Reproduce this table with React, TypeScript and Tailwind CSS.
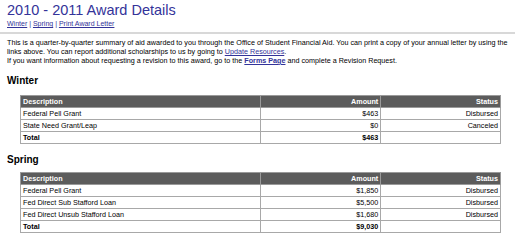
const winter = [
  { desc: "Federal Pell Grant", amount: "$463", status: "Disbursed" },
  { desc: "State Need Grant/Leap", amount: "$0", status: "Canceled" },
]

const spring = [
  { desc: "Federal Pell Grant", amount: "$1,850", status: "Disbursed" },
  { desc: "Fed Direct Sub Stafford Loan", amount: "$5,500", status: "Disbursed" },
  { desc: "Fed Direct Unsub Stafford Loan", amount: "$1,680", status: "Disbursed" },
]

type Row = { desc: string; amount: string; status: string }

function AwardTable({ rows, total }: { rows: Row[]; total: string }) {
  return (
    <table className="ml-[13px] w-[481px] border-collapse text-[7.2px] leading-[11px] text-black">
      <thead>
        <tr className="bg-[#5c5c5c] text-white font-bold">
          <th className="w-[241px] border border-[#9a9a9a] px-[2px] text-left font-bold">Description</th>
          <th className="w-[120px] border border-[#9a9a9a] px-[2px] text-right font-bold">Amount</th>
          <th className="w-[120px] border border-[#9a9a9a] px-[2px] text-right font-bold">Status</th>
        </tr>
      </thead>
      <tbody>
        {rows.map((r) => (
          <tr key={r.desc}>
            <td className="border border-[#a8a8a8] px-[2px]">{r.desc}</td>
            <td className="border border-[#a8a8a8] px-[2px] text-right">{r.amount}</td>
            <td className="border border-[#a8a8a8] px-[2px] text-right">{r.status}</td>
          </tr>
        ))}
        <tr className="font-bold">
          <td className="border border-[#a8a8a8] px-[2px]">Total</td>
          <td className="border border-[#a8a8a8] px-[2px] text-right">{total}</td>
          <td className="border border-[#a8a8a8] px-[2px]"></td>
        </tr>
      </tbody>
    </table>
  )
}

export default function App() {
  return (
    <div className="w-[515px] h-[245px] bg-white font-['Liberation_Sans',Arial,sans-serif] text-black overflow-hidden">
      <div className="px-[7px] pt-[2px]">
        <h1 className="text-[14.5px] leading-[17px] text-[#333399]">2010 - 2011 Award Details</h1>
        <div className="text-[7px] leading-[10px] text-[#333399]">
          <a className="underline">Winter</a> | <a className="underline">Spring</a> | <a className="underline">Print Award Letter</a>
        </div>
      </div>
      <div className="mt-[3px] h-[2px] bg-[#d8d8d8]" />
      <p className="px-[7px] pt-[4px] text-[7.2px] leading-[9px]">
        This is a quarter-by-quarter summary of aid awarded to you through the Office of Student Financial Aid. You can print a copy of your annual letter by using the links above. You can report additional scholarships to us by going to <a className="underline text-[#333399]">Update Resources</a>.
        <br />
        If you want information about requesting a revision to this award, go to the <a className="underline font-bold text-[#333399]">Forms Page</a> and complete a Revision Request.
      </p>
      <div className="px-[7px]">
        <h2 className="mt-[10px] mb-[8px] text-[10px] leading-[12px] font-bold">Winter</h2>
        <AwardTable rows={winter} total="$463" />
        <h2 className="mt-[10px] mb-[6px] text-[10px] leading-[12px] font-bold">Spring</h2>
        <AwardTable rows={spring} total="$9,030" />
      </div>
    </div>
  )
}
